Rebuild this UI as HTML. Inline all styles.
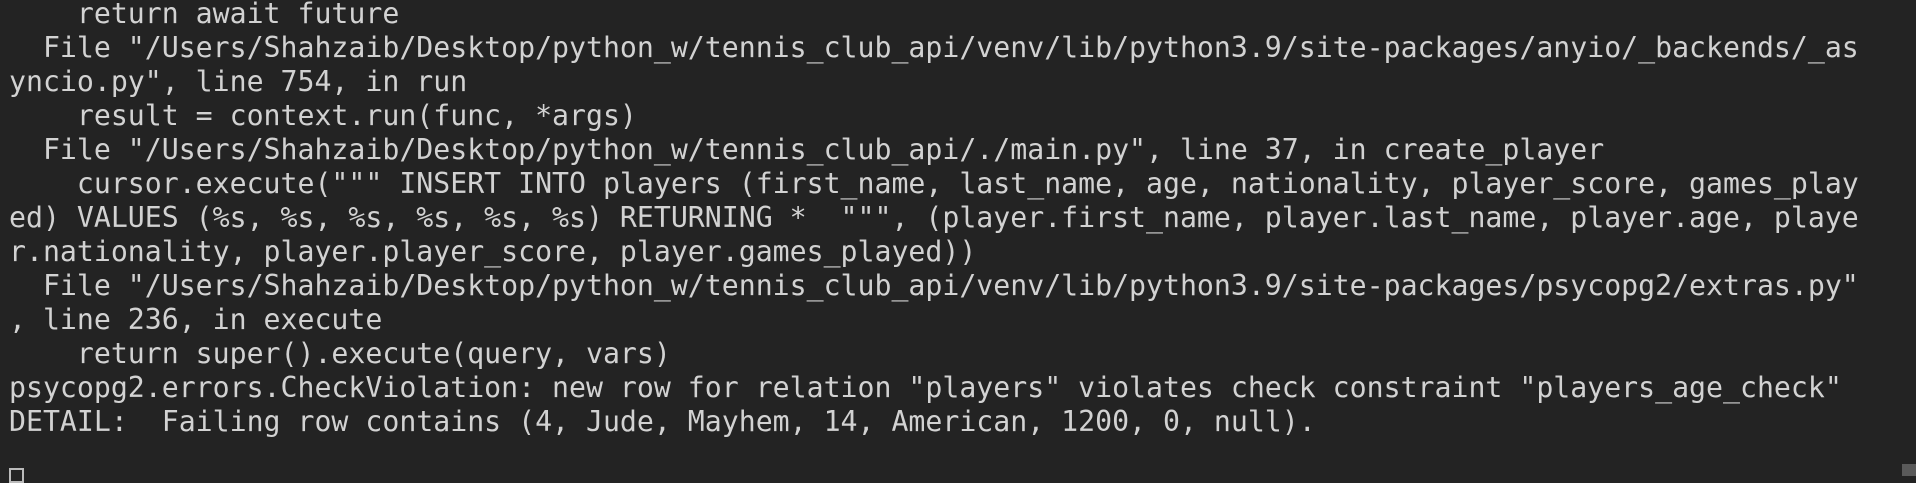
<!DOCTYPE html>
<html><head><meta charset="utf-8">
<style>
html,body{margin:0;padding:0;background:#232323;}
body{width:1916px;height:476px;overflow:hidden;position:relative;}
pre{margin:0;position:absolute;left:9px;top:-3px;font-family:"DejaVu Sans Mono","Liberation Mono",monospace;font-size:28.2px;line-height:34px;color:#d2d2d2;white-space:pre;}
.cur{position:absolute;left:9px;top:468px;width:15px;height:15px;border:2px solid #bbb;box-sizing:border-box;}
.sb{position:absolute;left:1902px;top:464px;width:14px;height:12px;background:#5a5a5a;}
</style></head><body>
<pre>    return await future
  File "/Users/Shahzaib/Desktop/python_w/tennis_club_api/venv/lib/python3.9/site-packages/anyio/_backends/_as
yncio.py", line 754, in run
    result = context.run(func, *args)
  File "/Users/Shahzaib/Desktop/python_w/tennis_club_api/./main.py", line 37, in create_player
    cursor.execute(""" INSERT INTO players (first_name, last_name, age, nationality, player_score, games_play
ed) VALUES (%s, %s, %s, %s, %s, %s) RETURNING *  """, (player.first_name, player.last_name, player.age, playe
r.nationality, player.player_score, player.games_played))
  File "/Users/Shahzaib/Desktop/python_w/tennis_club_api/venv/lib/python3.9/site-packages/psycopg2/extras.py"
, line 236, in execute
    return super().execute(query, vars)
psycopg2.errors.CheckViolation: new row for relation "players" violates check constraint "players_age_check"
DETAIL:  Failing row contains (4, Jude, Mayhem, 14, American, 1200, 0, null).
</pre>
<div class="cur"></div>
<div class="sb"></div>
</body></html>
